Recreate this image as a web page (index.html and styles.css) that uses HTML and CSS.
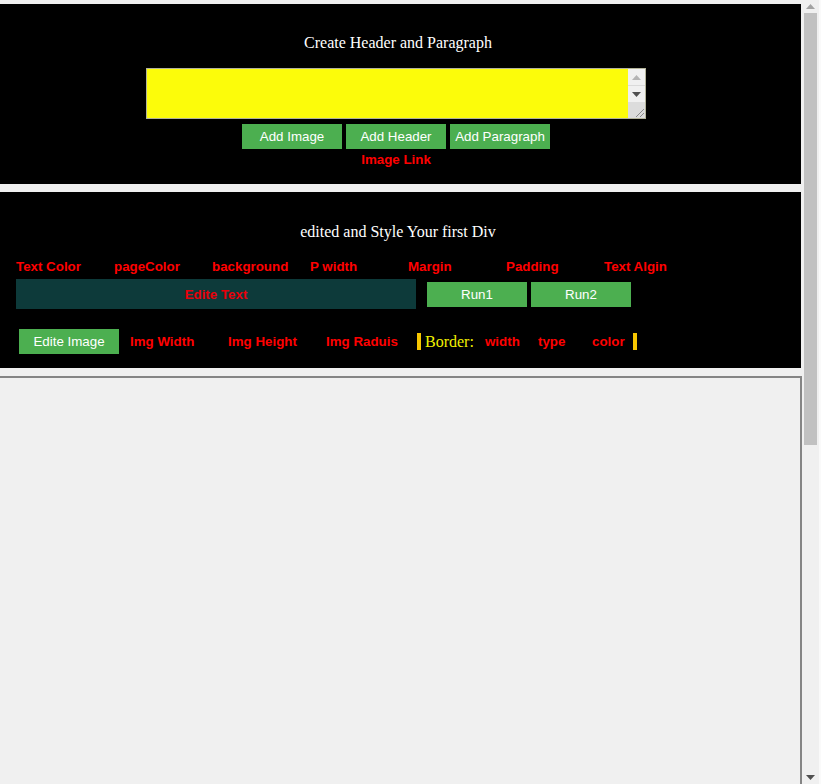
FILE: index.html
```
<!DOCTYPE html>
<html lang="en">
<head>
<meta charset="utf-8">
<title>Editor</title>
<link rel="stylesheet" href="styles.css">
</head>
<body>
<div class="window">
  <main class="page">
    <section class="panel creator">
      <p class="panel-title">Create Header and Paragraph</p>
      <div class="field">
        <textarea class="field-input"></textarea>
        <div class="field-scroll">
          <div class="fs-btn"><svg width="9" height="5" viewBox="0 0 9 5"><path d="M0 5 L4.5 0 L9 5 Z" fill="#b4b4b4"/></svg></div>
          <div class="fs-btn fs-down"><svg width="9" height="5" viewBox="0 0 9 5"><path d="M0 0 L4.5 5 L9 0 Z" fill="#505050"/></svg></div>
          <div class="fs-grip"><svg width="12" height="12" viewBox="0 0 12 12"><path d="M11 3 L3 11 M11 7 L7 11" stroke="#8a8a8a" stroke-width="1"/></svg></div>
        </div>
      </div>
      <div class="actions">
        <button class="btn">Add Image</button>
        <button class="btn">Add Header</button>
        <button class="btn">Add Paragraph</button>
      </div>
      <p class="link-label">Image Link</p>
    </section>

    <section class="panel styler">
      <p class="panel-title styler-title">edited and Style Your first Div</p>
      <div class="label-row">
        <span class="lbl">Text Color</span>
        <span class="lbl">pageColor</span>
        <span class="lbl">background</span>
        <span class="lbl">P width</span>
        <span class="lbl">Margin</span>
        <span class="lbl">Padding</span>
        <span class="lbl">Text Algin</span>
      </div>
      <div class="edit-row">
        <div class="edit-bar">Edite Text</div>
        <button class="btn run">Run1</button>
        <button class="btn run run2">Run2</button>
      </div>
      <div class="image-row">
        <button class="btn">Edite Image</button>
        <span class="lbl img-lbl">Img Width</span>
        <span class="lbl">Img Height</span>
        <span class="lbl narrow">Img Raduis</span>
        <span class="mark"></span>
        <span class="border-word">Border:</span>
        <span class="lbl bw-width">width</span>
        <span class="lbl bw-type">type</span>
        <span class="lbl bw-color">color</span>
        <span class="mark"></span>
      </div>
    </section>

    <div class="preview"></div>
  </main>

  <div class="scrollbar">
    <div class="sb-btn"><svg width="9" height="5" viewBox="0 0 9 5"><path d="M0 5 L4.5 0 L9 5 Z" fill="#a3a3a3"/></svg></div>
    <div class="sb-thumb"></div>
    <div class="sb-track"></div>
    <div class="sb-btn"><svg width="9" height="5" viewBox="0 0 9 5"><path d="M0 0 L4.5 5 L9 0 Z" fill="#505050"/></svg></div>
  </div>
</div>
</body>
</html>
```
FILE: styles.css
```
html, body {
  margin: 0;
  padding: 0;
}
body {
  background: #f0f0f0;
  font-family: "Liberation Serif", "Times New Roman", serif;
  overflow: hidden;
}
.window {
  display: flex;
  height: 784px;
}
.page {
  width: 802px;
  padding-top: 4px;
  display: flex;
  flex-direction: column;
  gap: 8px;
  box-sizing: border-box;
}
.panel {
  width: 801px;
  background: #000;
  box-sizing: border-box;
}
.panel-title {
  margin: 0;
  color: #fff;
  font-size: 16px;
  line-height: 18px;
  text-align: center;
}
.creator {
  padding: 30px 9px 16px 0;
  display: flex;
  flex-direction: column;
  align-items: center;
}
.creator .panel-title {
  padding-left: 4px;
}
.field {
  margin-top: 16px;
  width: 500px;
  height: 51px;
  box-sizing: border-box;
  border: 1px solid #b3b39a;
  display: flex;
  background: #ffff0a;
}
.field-input {
  flex: 1;
  border: 0;
  margin: 0;
  padding: 0;
  background: #fcfc0a;
  resize: none;
  outline: none;
}
.field-scroll {
  width: 17px;
  background: #f0f0f0;
  display: flex;
  flex-direction: column;
}
.fs-btn {
  height: 16px;
  display: flex;
  align-items: center;
  justify-content: center;
}
.fs-down {
  border-top: 1px solid #dadada;
}
.fs-grip {
  flex: 1;
  background: #dcdcdc;
  display: flex;
  align-items: flex-end;
  justify-content: flex-end;
}
.fs-grip svg {
  display: block;
}
.actions {
  margin-top: 5px;
  display: flex;
  gap: 4px;
}
.btn {
  width: 100px;
  height: 25px;
  border: 0;
  margin: 0;
  padding: 0;
  background: #4caf50;
  color: #fff;
  font-family: "Liberation Sans", Arial, sans-serif;
  font-size: 13.33px;
}
.link-label {
  margin: 3px 0 0;
  color: #f00;
  font-family: "Liberation Sans", Arial, sans-serif;
  font-weight: bold;
  font-size: 13.33px;
  line-height: 16px;
}
.styler {
  padding: 31px 0 14px;
}
.styler-title {
  padding-right: 5px;
}
.label-row {
  margin-top: 18px;
  padding-left: 16px;
  display: flex;
  line-height: 16px;
}
.lbl {
  width: 98px;
  flex: none;
  color: #f00;
  font-family: "Liberation Sans", Arial, sans-serif;
  font-weight: bold;
  font-size: 13.33px;
  line-height: 16px;
  white-space: nowrap;
}
.edit-row {
  margin-top: 4px;
  padding-left: 16px;
  display: flex;
  align-items: center;
}
.edit-bar {
  width: 400px;
  height: 30px;
  background: #0d3a3a;
  color: #e8000a;
  font-family: "Liberation Sans", Arial, sans-serif;
  font-weight: bold;
  font-size: 13.33px;
  line-height: 31px;
  text-align: center;
}
.run {
  margin-left: 11px;
}
.run2 {
  margin-left: 4px;
}
.image-row {
  margin-top: 20px;
  padding-left: 19px;
  height: 25px;
  display: flex;
  align-items: center;
}
.img-lbl {
  margin-left: 11px;
}
.narrow {
  width: 91px;
}
.mark {
  width: 4px;
  height: 17px;
  background: #f7c600;
  flex: none;
}
.border-word {
  width: 60px;
  margin-left: 4px;
  color: #f2f200;
  font-size: 16px;
  flex: none;
}
.bw-width { width: 53px; }
.bw-type { width: 54px; }
.bw-color { width: 41px; }
.preview {
  flex: 1;
  width: 802px;
  box-sizing: border-box;
  border-top: 2px solid #858585;
  border-right: 2px solid #858585;
}
.scrollbar {
  width: 19px;
  display: flex;
  flex-direction: column;
  background: #f0f0f0;
  border-right: 2px solid #fafafa;
  box-sizing: border-box;
}
.sb-btn {
  height: 13px;
  display: flex;
  align-items: center;
  justify-content: center;
}
.sb-thumb {
  height: 432px;
  width: 13px;
  margin-left: 2px;
  background: #c1c1c1;
}
.sb-track {
  flex: 1;
}
```
